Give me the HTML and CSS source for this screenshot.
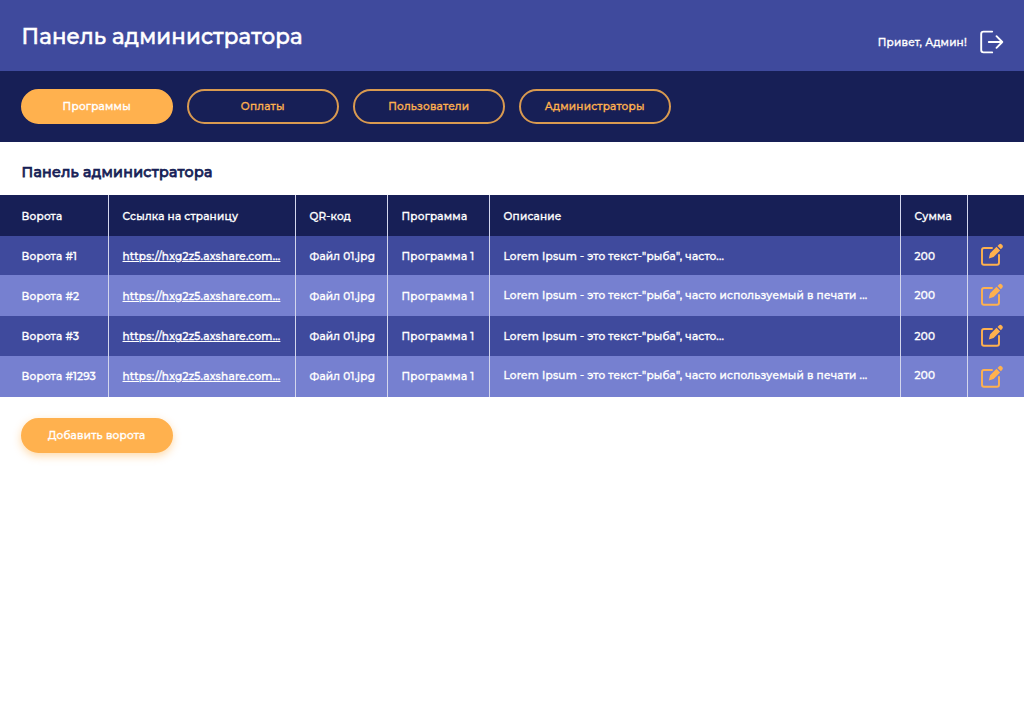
FILE: index.html
```html
<!DOCTYPE html>
<html lang="ru">
<head>
<meta charset="utf-8">
<title>Панель администратора</title>
<link rel="stylesheet" href="styles.css">
</head>
<body>
<svg class="sprite" aria-hidden="true">
  <symbol id="edit" viewBox="0 0 24 24">
    <path d="M12 5H4Q2 5 2 7V19.700Q2 21.700 4 21.700H17Q19 21.700 19 19.700V12" fill="none" stroke="currentColor" stroke-width="1.900" stroke-linecap="round"/>
    <path d="M16.500 3.800 20.100 7.400 13.600 13.900 8.800 15.400 10.100 10.200ZM17.500 2.900 19 1.400Q20.400 .200 21.700 1.400L22.300 2Q23.500 3.400 22.300 4.700L20.900 6.200Z" fill="currentColor"/>
  </symbol>
</svg>
<header class="header">
  <h1 class="header-title">Панель администратора</h1>
  <div class="user">
    <span class="greeting">Привет, Админ!</span>
    <svg class="logout" viewBox="0 0 24 24"><path d="M12.200 1.600H3.500Q1.200 1.600 1.200 3.900V20.100Q1.200 22.400 3.500 22.400H12.200M8.800 12H22.300M16.500 6.200 22.300 12 16.500 17.800" fill="none" stroke="currentColor" stroke-width="1.900" stroke-linecap="round" stroke-linejoin="round"/></svg>
  </div>
</header>
<nav class="nav">
  <a class="pill filled">Программы</a>
  <a class="pill">Оплаты</a>
  <a class="pill">Пользователи</a>
  <a class="pill">Администраторы</a>
</nav>
<main>
  <h2 class="title">Панель администратора</h2>
  <div class="table">
    <div class="row head"><div class="cell gate">Ворота</div><div class="cell">Ссылка на страницу</div><div class="cell">QR-код</div><div class="cell">Программа</div><div class="cell">Описание</div><div class="cell">Сумма</div><div class="cell"></div></div>
    <div class="row first"><div class="cell gate">Ворота #1</div><div class="cell"><a class="link">https://hxg2z5.axshare.com...</a></div><div class="cell file">Файл 01.jpg</div><div class="cell program">Программа 1</div><div class="cell desc">Lorem Ipsum - это текст-"рыба", часто...</div><div class="cell sum">200</div><div class="cell"><svg class="edit"><use href="#edit"/></svg></div></div>
    <div class="row light"><div class="cell gate">Ворота #2</div><div class="cell"><a class="link">https://hxg2z5.axshare.com...</a></div><div class="cell file">Файл 01.jpg</div><div class="cell program">Программа 1</div><div class="cell desc">Lorem Ipsum - это текст-"рыба", часто используемый в печати ...</div><div class="cell sum">200</div><div class="cell"><svg class="edit"><use href="#edit"/></svg></div></div>
    <div class="row third"><div class="cell gate">Ворота #3</div><div class="cell"><a class="link">https://hxg2z5.axshare.com...</a></div><div class="cell file">Файл 01.jpg</div><div class="cell program">Программа 1</div><div class="cell desc">Lorem Ipsum - это текст-"рыба", часто...</div><div class="cell sum">200</div><div class="cell"><svg class="edit"><use href="#edit"/></svg></div></div>
    <div class="row light last"><div class="cell gate">Ворота #1293</div><div class="cell"><a class="link">https://hxg2z5.axshare.com...</a></div><div class="cell file">Файл 01.jpg</div><div class="cell program">Программа 1</div><div class="cell desc">Lorem Ipsum - это текст-"рыба", часто используемый в печати ...</div><div class="cell sum">200</div><div class="cell"><svg class="edit"><use href="#edit"/></svg></div></div>
  </div>
  <button class="pill filled add">Добавить ворота</button>
</main>
</body>
</html>
```
FILE: styles.css
```css
* { box-sizing: border-box; }
body { margin: 0; min-height: 728px; background: #fff; color: #fff; font: 500 10.5px/16px Montserrat, Inter, sans-serif; letter-spacing: .2px; -webkit-text-stroke: .3px currentColor; }
.sprite { display: none; }
.header { display: flex; justify-content: space-between; height: 71px; padding: 0 20px 0 21.5px; background: #3f4a9d; }
.header-title { margin: 21px 0 0; font-size: 21.3px; line-height: 30px; font-weight: 500; letter-spacing: .18px; white-space: nowrap; -webkit-text-stroke-width: .5px; }
.user { display: flex; align-items: center; gap: 13px; height: 24px; margin-top: 30px; }
.greeting { padding-top: 1px; }
.logout { width: 24px; height: 24px; }
.nav { display: flex; gap: 14.5px; height: 71px; padding: 18px 21px 0; background: #171f56; }
.pill { display: flex; align-items: center; justify-content: center; width: 151.500px; height: 35px; border: 2px solid #d99a50; border-radius: 18px; color: #ffb14e; font: inherit; letter-spacing: .22px; padding: 1px 0 0; }
.filled { background: #ffb14e; border-color: #ffb14e; color: #fff; }
.title { margin: 0; padding: 20px 21.5px 0; height: 53px; color: #171f56; font-size: 14.200px; line-height: 20px; font-weight: 500; letter-spacing: .3px; -webkit-text-stroke-width: .75px; }
.table { white-space: nowrap; }
.row { display: grid; grid-template-columns: 109px 187px 92px 102px 411px 67px 1fr; height: 41px; background: #3f4a9d; }
.head { background: #171f56; }
.first { height: 38.500px; }
.third { height: 40px; }
.light { background: #7680d0; }
.cell { display: flex; align-items: center; padding-left: 13.500px; border-right: 1px solid #d3d6ed; padding-top: 3px; }
.cell:last-child { border-right: 0; padding: 0 0 0 12px; }
.gate { padding-left: 21.500px; }
.light .desc, .light .sum { padding-top: 1px; }
.last .cell { padding-top: 1px; }
.last .desc, .last .sum { padding-top: 0; padding-bottom: 1px; }
.link { text-decoration: underline 1px; text-underline-offset: 1px; }
.edit { width: 24px; height: 24px; color: #ffb14e; }
.add { margin: 21px 0 0 21px; box-shadow: 0 3px 9px rgba(255, 177, 78, .48); }
```
